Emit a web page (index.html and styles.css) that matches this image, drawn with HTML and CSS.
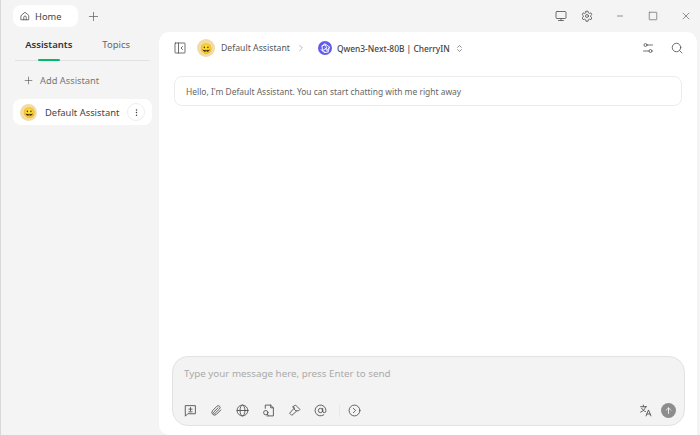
FILE: index.html

```html
<!DOCTYPE html>
<html lang="en">
<head>
    <meta charset="UTF-8">
    <title>Cherry Studio</title>
    <link rel="stylesheet" href="styles.css">
</head>
<body>
    <div class="app">
        <div class="titlebar">
            <div class="tab">
                <svg class="ico-sm" viewBox="0 0 24 24"><path d="M3 10.500 12 3l9 7.500V21H3z"/><path d="M9 21v-6a3 3 0 0 1 6 0v6"/></svg>
                <span>Home</span>
            </div>
            <svg class="add-tab" viewBox="0 0 24 24"><path d="M12 3v18M3 12h18"/></svg>
            <div class="win-tools">
                <svg class="ico" viewBox="0 0 24 24"><rect x="2" y="3" width="20" height="14" rx="2"/><path d="M12 17v4M7 21h10"/></svg>
                <svg class="ico" viewBox="0 0 24 24"><circle cx="12" cy="12" r="3"/><path d="M10 2.500h4l.6 3 2.200 1.200 2.900-1 2 3.500-2.300 2v2.600l2.300 2-2 3.500-2.900-1-2.200 1.200-.6 3h-4l-.6-3-2.200-1.200-2.900 1-2-3.500 2.300-2v-2.600l-2.300-2 2-3.500 2.900 1 2.200-1.200z"/></svg>
            </div>
            <div class="win-btns">
                <svg class="ico-win" viewBox="0 0 24 24"><path d="M6 12h12"/></svg>
                <svg class="ico-win" viewBox="0 0 24 24"><rect x="3" y="3" width="18" height="18" rx="1"/></svg>
                <svg class="ico-win" viewBox="0 0 24 24"><path d="M5 5l14 14M19 5 5 19"/></svg>
            </div>
        </div>

        <div class="content">
            <aside class="sidebar">
                <div class="side-tabs">
                    <div class="side-tab active">Assistants</div>
                    <div class="side-tab">Topics</div>
                </div>
                <div class="add-assistant">
                    <svg class="ico-plus" viewBox="0 0 24 24"><path d="M12 3v18M3 12h18"/></svg>
                    <span>Add Assistant</span>
                </div>
                <div class="assistant">
                    <div class="avatar">😀</div>
                    <span class="assistant-name">Default Assistant</span>
                    <div class="more">
                        <svg viewBox="0 0 24 24"><circle cx="12" cy="5" r="2"/><circle cx="12" cy="12" r="2"/><circle cx="12" cy="19" r="2"/></svg>
                    </div>
                </div>
            </aside>

            <main class="main">
                <header class="chat-head">
                    <svg class="ico panel" viewBox="0 0 24 24"><rect x="2" y="2" width="20" height="20" rx="1"/><path d="M9 2v20M17 9l-3 3 3 3"/></svg>
                    <div class="avatar">😀</div>
                    <span class="head-name">Default Assistant</span>
                    <svg class="crumb" viewBox="0 0 24 24"><path d="m8 4 8 8-8 8"/></svg>
                    <div class="model-logo">
                        <svg viewBox="0 0 24 24"><path d="M12 3 6 8l1 9M21 10l-7-5-8 3M18 20l3-10-5 7M4 15l6 6 8-1M13 21l-6-4 9-5-4-7M12 12l4 5"/></svg>
                    </div>
                    <span class="model-name">Qwen3-Next-80B | CherryIN</span>
                    <svg class="updown" viewBox="0 0 24 24"><path d="m7 9 5-5 5 5M7 15l5 5 5-5"/></svg>
                    <div class="head-tools">
                        <svg class="ico" viewBox="0 0 24 24"><circle cx="7" cy="6" r="3"/><path d="M10 6h11M3 18h11"/><circle cx="17" cy="18" r="3"/></svg>
                        <svg class="ico" viewBox="0 0 24 24"><circle cx="11" cy="11" r="8.500"/><path d="m17 17 5 5"/></svg>
                    </div>
                </header>

                <div class="messages">
                    <div class="welcome">Hello, I'm Default Assistant. You can start chatting with me right away</div>
                </div>

                <div class="composer">
                    <div class="placeholder">Type your message here, press Enter to send</div>
                    <div class="composer-tools">
                        <svg class="ico" viewBox="0 0 24 24"><path d="M3 3h18v15H7l-4 4z"/><path d="M12 6.500v6M9 9.500h6M9 14.500h6"/></svg>
                        <svg class="ico" viewBox="0 0 24 24"><path d="m20 11-8.500 8.500a5 5 0 0 1-7-7L13 4a3.400 3.400 0 0 1 4.800 4.800l-8.500 8.500a1.700 1.700 0 0 1-2.400-2.400L15 7"/></svg>
                        <svg class="ico" viewBox="0 0 24 24"><circle cx="12" cy="12" r="10"/><path d="M2 12h20"/><ellipse cx="12" cy="12" rx="4.500" ry="10"/></svg>
                        <svg class="ico" viewBox="0 0 24 24"><path d="M6 8V2h10l5 5v15H9"/><path d="M16 2v5h5"/><circle cx="7" cy="16" r="4"/><path d="m10 19 2 2"/></svg>
                        <svg class="ico" viewBox="0 0 24 24"><path d="M11 8 3 17l4 4 9-8"/><path d="m9 5 5-3 8 8-3 3-3-1-1 1-4-4 1-1z"/></svg>
                        <svg class="ico" viewBox="0 0 24 24"><circle cx="12" cy="12" r="4"/><path d="M16 8v5a3 3 0 0 0 6 0v-1a10 10 0 1 0-4 8"/></svg>
                        <div class="tool-sep"></div>
                        <svg class="ico" viewBox="0 0 24 24"><circle cx="12" cy="12" r="10"/><path d="m10 8 4 4-4 4"/></svg>
                        <div class="composer-right">
                            <svg class="ico" viewBox="0 0 24 24"><path d="M3 5h11M8 2v3M12 5c-1 5-4 8-9 10M5 8c1 3 4 5 7 6"/><path d="m13 22 4.500-11L22 22M14.500 18.500h6"/></svg>
                            <div class="send">
                                <svg viewBox="0 0 24 24"><path d="M12 20V5M6 11l6-6 6 6"/></svg>
                            </div>
                        </div>
                    </div>
                </div>
            </main>
        </div>
    </div>
</body>
</html>
```

FILE: styles.css

```css
* {
    box-sizing: border-box;
}
html, body {
    height: 100%;
}
body {
    margin: 0;
    font-family: 'Noto Sans', 'Liberation Sans', sans-serif;
    background: #f4f4f4;
    color: #555;
    overflow: hidden;
}
svg {
    fill: none;
    stroke: #555;
    stroke-width: 1.700;
    stroke-linecap: round;
    stroke-linejoin: round;
    flex: none;
}
.app {
    height: 435px;
    display: flex;
    flex-direction: column;
    border-left: 1px solid #d8d8d8;
}
.titlebar {
    height: 32px;
    flex: none;
    display: flex;
    align-items: center;
    padding: 0 7px 0 12px;
}
.tab {
    width: 65px;
    height: 22px;
    background: #fff;
    border-radius: 8px;
    display: flex;
    align-items: center;
    gap: 5px;
    padding-left: 7px;
    font-size: 9.300px;
    color: #444;
}
.ico-sm {
    width: 10px;
    height: 10px;
    stroke-width: 2;
}
.add-tab {
    width: 11px;
    height: 11px;
    margin-left: 10px;
    stroke: #666;
}
.win-tools {
    margin-left: auto;
    display: flex;
    gap: 14px;
    margin-right: 22px;
}
.win-btns {
    display: flex;
    gap: 23px;
    margin-right: 2px;
}
.ico {
    width: 12px;
    height: 12px;
}
.ico-win {
    width: 10px;
    height: 10px;
    stroke: #666;
}
.content {
    flex: 1;
    display: flex;
    min-height: 0;
}
.sidebar {
    width: 158px;
    flex: none;
    padding: 0 7px 0 12px;
}
.side-tabs {
    display: flex;
    height: 29px;
    margin: 0 2px;
    border-bottom: 1px solid #e2e2e2;
}
.side-tab {
    flex: 1;
    text-align: center;
    font-size: 9.500px;
    line-height: 26px;
    color: #666;
    position: relative;
}
.side-tab.active {
    font-weight: 600;
    color: #333;
}
.side-tab.active::after {
    content: "";
    position: absolute;
    left: 23px;
    bottom: -1px;
    width: 22px;
    height: 2px;
    background: #00b96b;
    border-radius: 1px;
}
.add-assistant {
    display: flex;
    align-items: center;
    gap: 7px;
    height: 38px;
    padding-left: 11px;
    font-size: 9.300px;
    color: #777;
}
.ico-plus {
    width: 9px;
    height: 9px;
}
.assistant {
    height: 26px;
    background: #fff;
    border-radius: 8px;
    display: flex;
    align-items: center;
    padding: 0 7px;
    font-size: 9.400px;
    color: #444;
}
.avatar {
    width: 17px;
    height: 17px;
    border-radius: 50%;
    background: #f0dca4;
    display: flex;
    align-items: center;
    justify-content: center;
    font-size: 10px;
    line-height: 1;
    flex: none;
}
.assistant-name {
    margin-left: 8px;
    white-space: nowrap;
}
.more {
    width: 18px;
    height: 18px;
    margin-left: auto;
    border: 1px solid #eee;
    border-radius: 50%;
    display: flex;
    align-items: center;
    justify-content: center;
}
.more svg {
    width: 9px;
    height: 9px;
    fill: #444;
    stroke: none;
}
.main {
    flex: 1;
    background: #fff;
    border-radius: 10px 10px 0 10px;
    margin-right: 3px;
    display: flex;
    flex-direction: column;
    min-width: 0;
}
.chat-head {
    height: 32px;
    flex: none;
    display: flex;
    align-items: center;
    padding: 0 14px 0 15px;
    font-size: 8.700px;
    color: #555;
}
.chat-head .avatar {
    width: 18px;
    height: 18px;
    margin-left: 11px;
}
.head-name {
    margin-left: 6px;
    white-space: nowrap;
}
.crumb {
    width: 8px;
    height: 8px;
    margin-left: 7px;
    stroke: #888;
}
.model-logo {
    width: 14px;
    height: 14px;
    margin-left: 13px;
    border-radius: 50%;
    background: #615ced;
    display: flex;
    align-items: center;
    justify-content: center;
}
.model-logo svg {
    width: 12px;
    height: 12px;
    stroke: #fff;
    stroke-width: 1.800;
}
.model-name {
    margin-left: 5px;
    font-size: 8.400px;
    font-weight: 500;
    color: #444;
    white-space: nowrap;
}
.updown {
    width: 9px;
    height: 9px;
    margin-left: 5px;
}
.head-tools {
    margin-left: auto;
    display: flex;
    gap: 17px;
}
.messages {
    flex: 1;
    padding: 12px 15px 0 15px;
}
.welcome {
    height: 30px;
    border: 1px solid #ececec;
    border-radius: 8px;
    padding-left: 11px;
    display: flex;
    align-items: center;
    font-size: 8.450px;
    color: #666;
}
.composer {
    height: 70px;
    margin: 0 12px 9px 13px;
    background: #f3f3f3;
    border: 1px solid #e2e2e2;
    border-radius: 16px;
    padding: 10px 8px 7px 11px;
    display: flex;
    flex-direction: column;
    justify-content: space-between;
}
.placeholder {
    font-size: 9.800px;
    color: #aaa;
}
.composer-tools {
    display: flex;
    align-items: center;
    gap: 13px;
}
.composer-tools .ico {
    width: 13px;
    height: 13px;
}
.tool-sep {
    width: 1px;
    height: 12px;
    background: #e8e8e8;
    margin: 0 -5px 0 -1px;
}
.composer-right {
    margin-left: auto;
    display: flex;
    align-items: center;
    gap: 9px;
}
.send {
    width: 15px;
    height: 15px;
    border-radius: 50%;
    background: #8d8d8d;
    display: flex;
    align-items: center;
    justify-content: center;
}
.send svg {
    width: 9px;
    height: 9px;
    stroke: #fff;
    stroke-width: 2.200;
}
```
